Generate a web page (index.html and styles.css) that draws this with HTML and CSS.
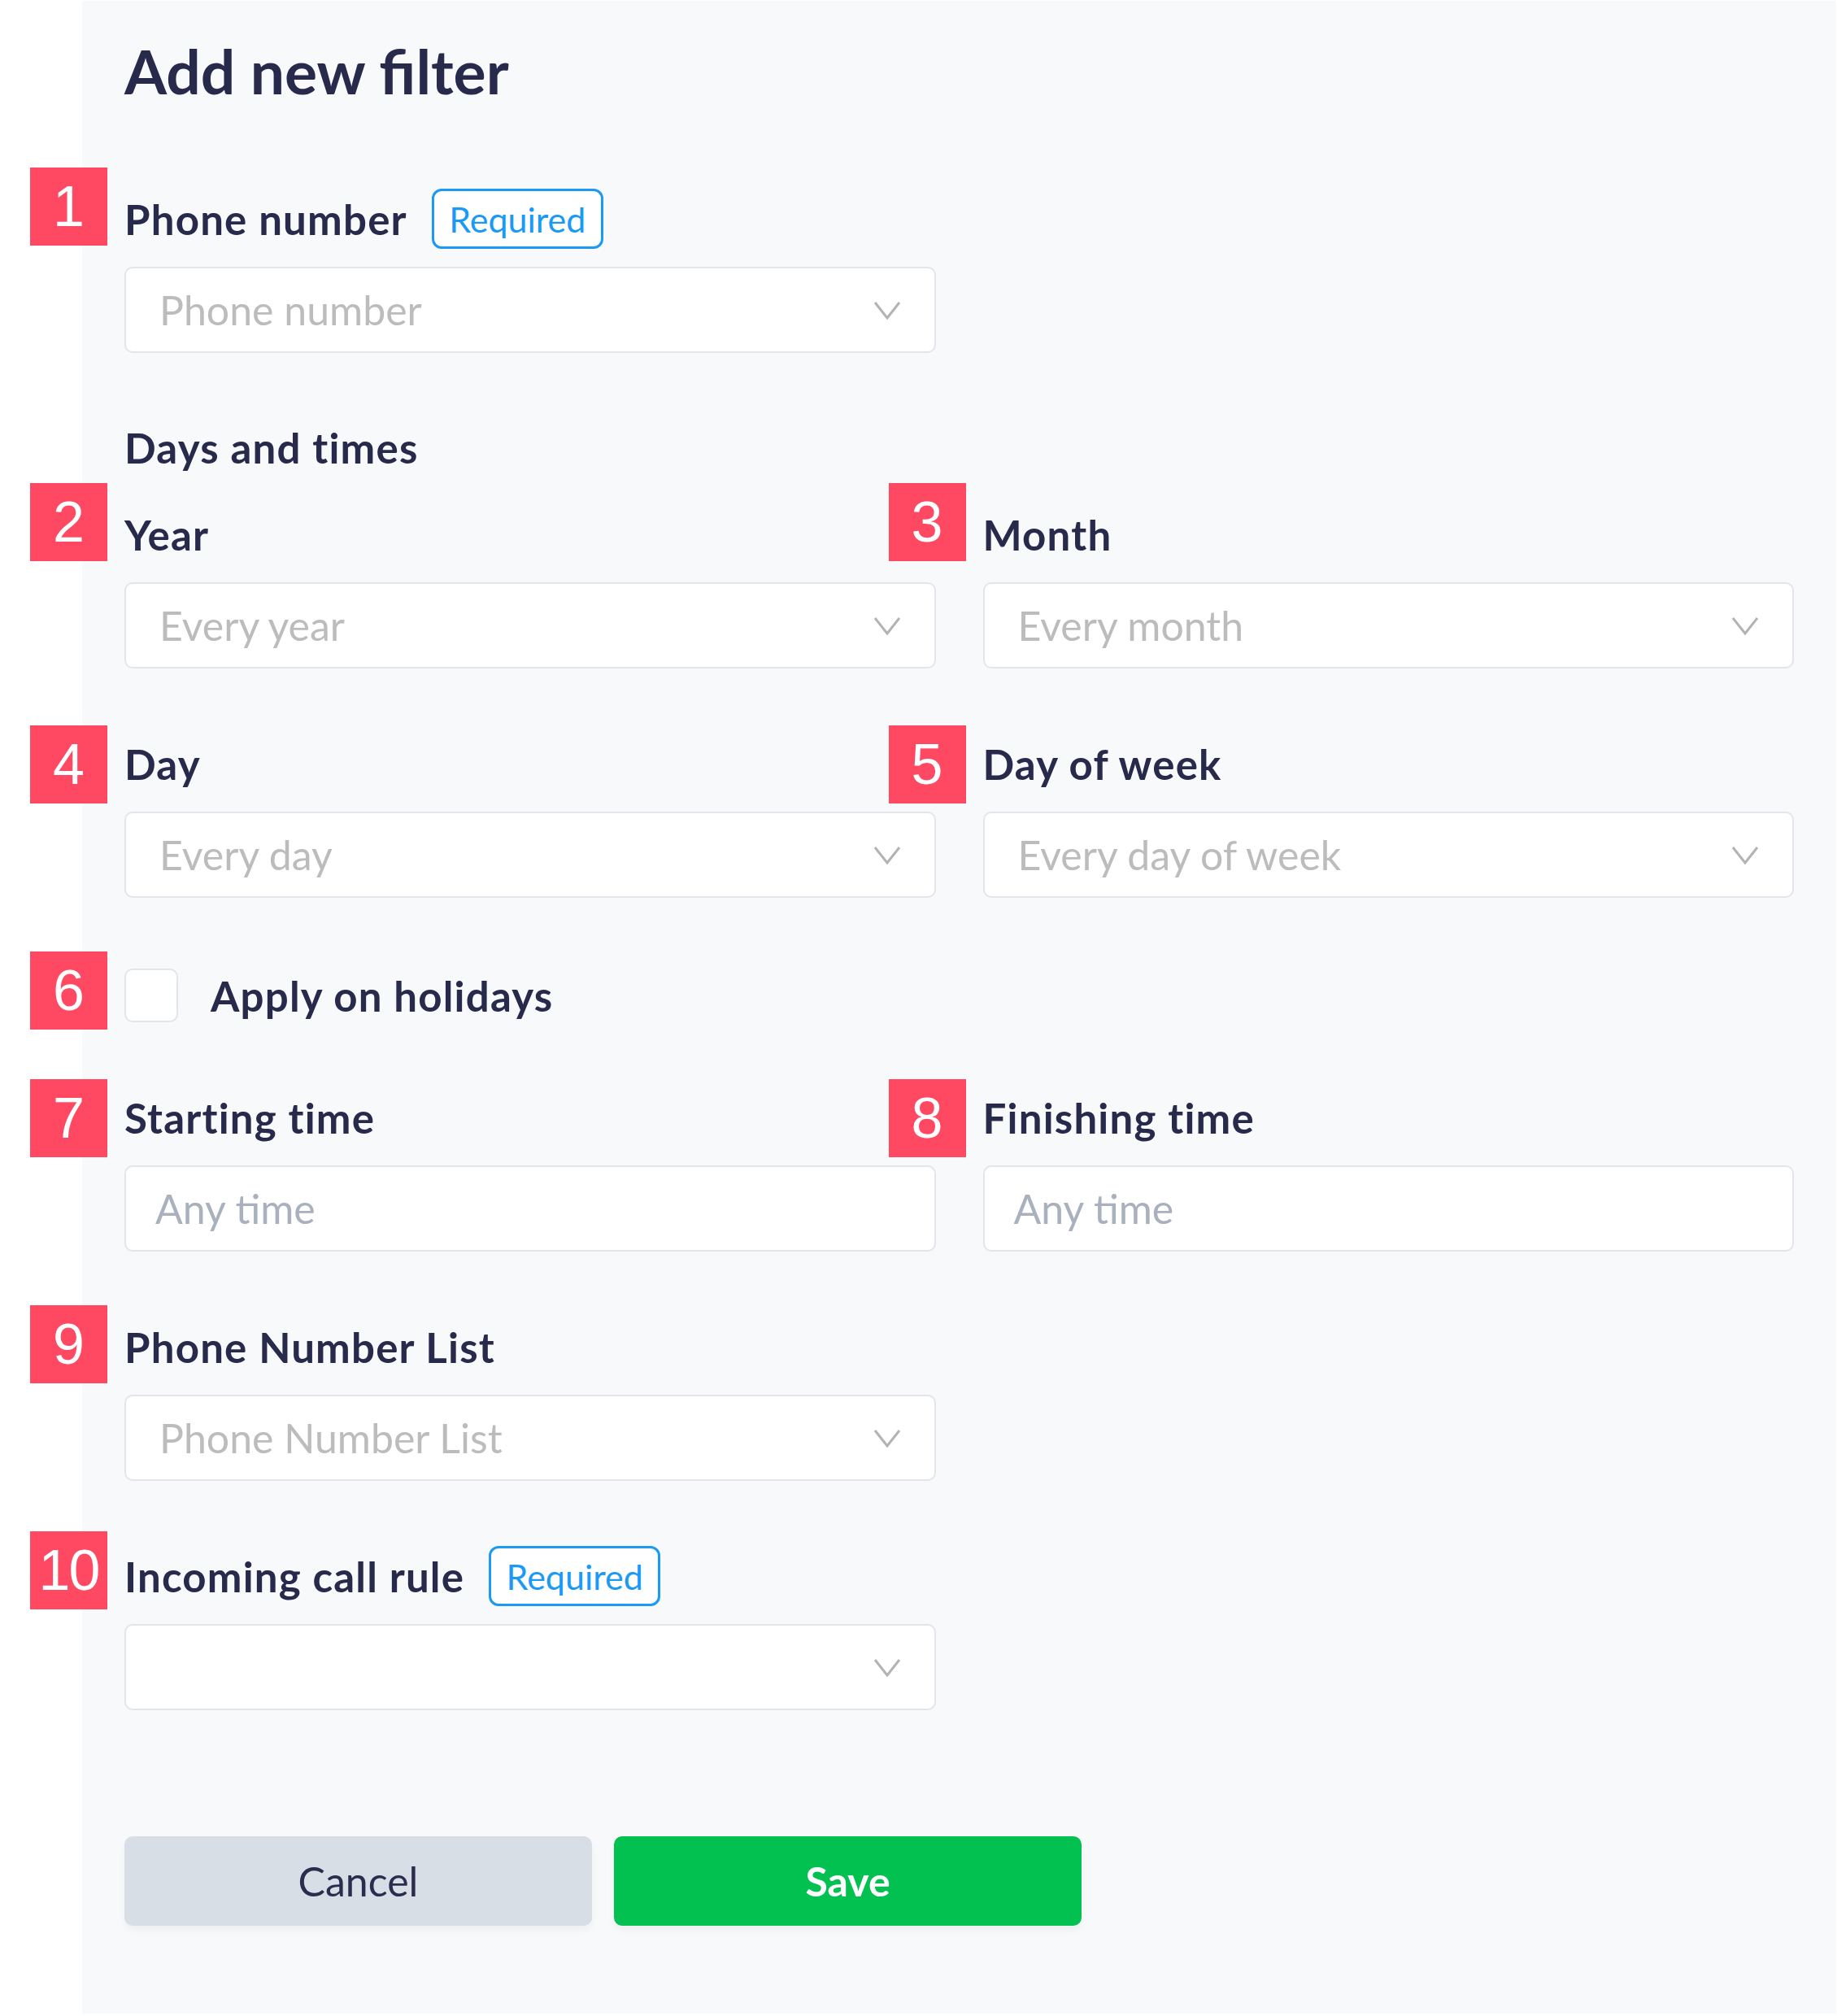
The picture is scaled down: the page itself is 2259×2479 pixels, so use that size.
FILE: index.html
```html
<!DOCTYPE html>
<html lang="en">

<head>
    <meta charset="UTF-8">
    <meta name="viewport" content="width=device-width, initial-scale=1.0">
    <title>Add new filter</title>
    <link rel="stylesheet" href="styles.css">
</head>

<body>
    <div class="panel">
        <h1 class="title">Add new filter</h1>

        <div class="form">
            <div class="row">
                <div class="field">
                    <span class="mark mark-top">1</span>
                    <div class="label">Phone number <span class="required">Required</span></div>
                    <div class="select">
                        <span class="placeholder">Phone number</span>
                        <svg class="chevron" viewBox="0 0 34 23"><polyline points="2,2 17,21 32,2" /></svg>
                    </div>
                </div>
            </div>

            <div class="section">
                <div class="section-title">Days and times</div>
                <div class="row">
                    <div class="field">
                        <span class="mark mark-top">2</span>
                        <div class="label">Year</div>
                        <div class="select">
                            <span class="placeholder">Every year</span>
                            <svg class="chevron" viewBox="0 0 34 23"><polyline points="2,2 17,21 32,2" /></svg>
                        </div>
                    </div>
                    <div class="field">
                        <span class="mark mark-top">3</span>
                        <div class="label">Month</div>
                        <div class="select">
                            <span class="placeholder">Every month</span>
                            <svg class="chevron" viewBox="0 0 34 23"><polyline points="2,2 17,21 32,2" /></svg>
                        </div>
                    </div>
                </div>
            </div>

            <div class="row">
                <div class="field">
                    <span class="mark mark-low">4</span>
                    <div class="label">Day</div>
                    <div class="select">
                        <span class="placeholder">Every day</span>
                        <svg class="chevron" viewBox="0 0 34 23"><polyline points="2,2 17,21 32,2" /></svg>
                    </div>
                </div>
                <div class="field">
                    <span class="mark mark-low">5</span>
                    <div class="label">Day of week</div>
                    <div class="select">
                        <span class="placeholder">Every day of week</span>
                        <svg class="chevron" viewBox="0 0 34 23"><polyline points="2,2 17,21 32,2" /></svg>
                    </div>
                </div>
            </div>

            <div class="row">
                <div class="field check-field">
                    <span class="mark mark-mid">6</span>
                    <span class="checkbox"></span>
                    <span class="label check-label">Apply on holidays</span>
                </div>
            </div>

            <div class="row">
                <div class="field">
                    <span class="mark mark-low">7</span>
                    <div class="label">Starting time</div>
                    <input class="input" type="text" placeholder="Any time">
                </div>
                <div class="field">
                    <span class="mark mark-low">8</span>
                    <div class="label">Finishing time</div>
                    <input class="input" type="text" placeholder="Any time">
                </div>
            </div>

            <div class="row">
                <div class="field">
                    <span class="mark mark-mid">9</span>
                    <div class="label">Phone Number List</div>
                    <div class="select">
                        <span class="placeholder">Phone Number List</span>
                        <svg class="chevron" viewBox="0 0 34 23"><polyline points="2,2 17,21 32,2" /></svg>
                    </div>
                </div>
            </div>

            <div class="row">
                <div class="field">
                    <span class="mark mark-ten">10</span>
                    <div class="label">Incoming call rule <span class="required">Required</span></div>
                    <div class="select">
                        <span class="placeholder"></span>
                        <svg class="chevron" viewBox="0 0 34 23"><polyline points="2,2 17,21 32,2" /></svg>
                    </div>
                </div>
            </div>
        </div>

        <div class="actions">
            <button class="btn btn-cancel">Cancel</button>
            <button class="btn btn-save">Save</button>
        </div>
    </div>
</body>

</html>
```

FILE: styles.css
```css
html,
body {
    margin: 0;
    background: #fff;
    font-family: 'Lato', 'Noto Sans', sans-serif;
    color: #272a4b;
}

.panel {
    margin: 1px 1px 3px 101px;
    padding: 41px 52px 108px 52px;
    background: #f8f9fb;
}

.title {
    margin: 0 0 107px 0;
    font-size: 75px;
    line-height: 90px;
    font-weight: 700;
    color: #272a4b;
}

.form {
    display: flex;
    flex-direction: column;
    gap: 87px;
}

.section-title {
    font-size: 51px;
    line-height: 60px;
    font-weight: 700;
    letter-spacing: 1.2px;
    margin-bottom: 46px;
}

.row {
    display: grid;
    grid-template-columns: 1fr 1fr;
    column-gap: 58px;
}

.field {
    position: relative;
}

/* numbered markers sit left of the field, outside the panel */
.mark {
    position: absolute;
    left: -116px;
    top: -22px;
    width: 95px;
    height: 96px;
    background: #ff4862;
    color: #fff;
    font-family: 'Liberation Sans', Arial, sans-serif;
    font-size: 70px;
    line-height: 96px;
    text-align: center;
}

.mark-top {
    top: -33px;
}

.mark-mid {
    top: -21px;
}

.mark-low {
    top: -17px;
}

.mark-ten {
    top: -25px;
    letter-spacing: -2px;
}

.label {
    display: flex;
    align-items: center;
    height: 60px;
    margin-bottom: 29px;
    font-size: 51px;
    font-weight: 700;
    letter-spacing: 1.2px;
    white-space: nowrap;
}

.required {
    display: inline-flex;
    align-items: center;
    justify-content: center;
    box-sizing: border-box;
    width: 211px;
    height: 74px;
    margin-left: 30px;
    border: 3px solid #1a9af5;
    border-radius: 12px;
    background: #fff;
    color: #1a9af5;
    font-size: 43px;
    font-weight: 400;
    letter-spacing: 0;
}

.select,
.input {
    display: flex;
    align-items: center;
    justify-content: space-between;
    box-sizing: border-box;
    width: 100%;
    height: 106px;
    padding: 0 41px 0 41px;
    border: 2px solid #e3e5ea;
    border-radius: 10px;
    background: #fff;
}

.placeholder {
    font-size: 50px;
    color: #bcbcbc;
}

.chevron {
    width: 34px;
    height: 23px;
    fill: none;
    stroke: #b3b3b3;
    stroke-width: 3;
}

.input {
    padding-left: 36px;
    font-family: inherit;
    font-size: 50px;
    color: #272a4b;
    outline: none;
}

.input::placeholder {
    color: #a9b1be;
}

.check-field {
    display: flex;
    align-items: center;
    gap: 40px;
}

.checkbox {
    box-sizing: border-box;
    width: 66px;
    height: 66px;
    border: 2px solid #e3e5ea;
    border-radius: 10px;
    background: #fff;
}

.check-label {
    margin-bottom: 0;
}

.actions {
    display: flex;
    gap: 27px;
    margin-top: 155px;
}

.btn {
    width: 575px;
    height: 110px;
    border: none;
    border-radius: 10px;
    font-family: inherit;
    font-size: 50px;
    box-shadow: 0 6px 8px rgba(0, 0, 0, 0.04);
    cursor: pointer;
}

.btn-cancel {
    background: #d8dee6;
    color: #2b2d4f;
    font-weight: 400;
}

.btn-save {
    background: #03c151;
    color: #fff;
    font-weight: 700;
}
```
